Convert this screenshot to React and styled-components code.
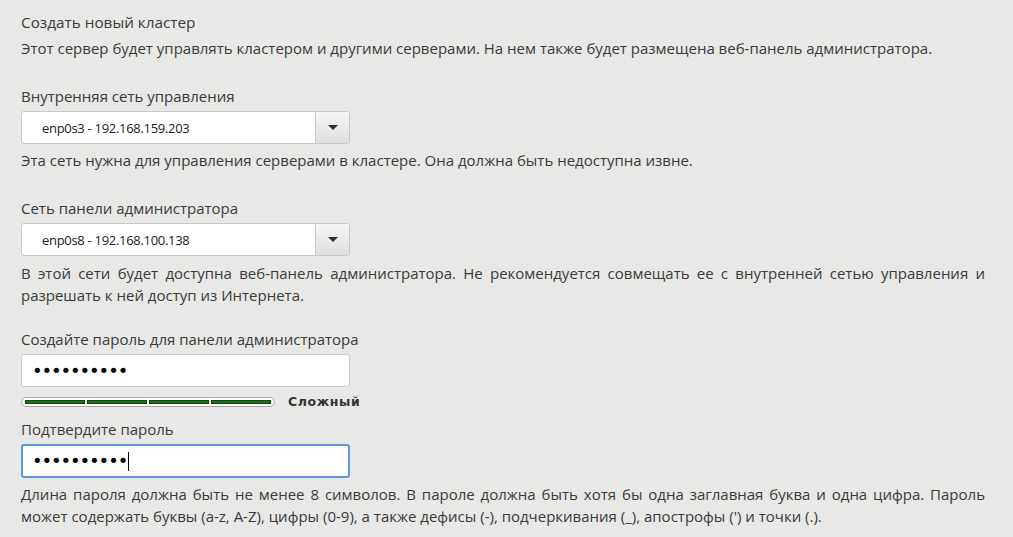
import React from "react";
import styled, { createGlobalStyle } from "styled-components";

const Global = createGlobalStyle`
  html, body {
    margin: 0;
    padding: 0;
    background: #e8e8e7;
  }
  body {
    font-family: "Open Sans", "Noto Sans", sans-serif;
    color: #3a3a3a;
  }
`;

const Page = styled.div`
  width: 964px;
  padding: 10px 0 8px 21px;
`;

const Title = styled.h1`
  margin: 0;
  font-size: 15.3px;
  font-weight: 400;
  line-height: 24px;
`;

const Text = styled.p`
  margin: ${(p) => p.$margin || "0"};
  font-size: 15px;
  line-height: 22px;
  text-align: ${(p) => (p.$justify ? "justify" : "left")};
`;

const Field = styled.div`
  margin-top: ${(p) => p.$top || 0}px;
  display: flex;
  flex-direction: column;
`;

const Label = styled.label`
  font-size: 15px;
  line-height: 22px;
  margin-bottom: 4px;
`;

const Select = styled.div`
  width: 329px;
  height: 33px;
  box-sizing: border-box;
  display: flex;
  background: #fff;
  border: 1px solid #c9c9c9;
  border-radius: 3px;
  overflow: hidden;
`;

const SelectValue = styled.div`
  flex: 1;
  display: flex;
  align-items: center;
  padding-left: 20px;
  font-size: 13px;
  letter-spacing: -0.3px;
  color: #222;
`;

const SelectButton = styled.div`
  width: 33px;
  border-left: 1px solid #c9c9c9;
  background: linear-gradient(#f6f6f6, #dedede);
  display: flex;
  align-items: center;
  justify-content: center;
  &::after {
    content: "";
    border-left: 5px solid transparent;
    border-right: 5px solid transparent;
    border-top: 5px solid #2e2e2e;
  }
`;

const PasswordBox = styled.div`
  width: 329px;
  height: ${(p) => (p.$focused ? 34 : 33)}px;
  box-sizing: border-box;
  display: flex;
  align-items: center;
  padding-left: ${(p) => (p.$focused ? 9 : 10)}px;
  background: #fff;
  border: ${(p) => (p.$focused ? "2px solid #5a9ae2" : "1px solid #c9c9c9")};
  border-radius: 3px;
`;

const Dots = styled.span`
  font-family: "DejaVu Sans", sans-serif;
  font-size: 18px;
  letter-spacing: -1.1px;
  color: #000;
  line-height: 1;
`;

const Caret = styled.span`
  width: 1px;
  height: 19px;
  margin-left: 1px;
  background: #000;
`;

const StrengthRow = styled.div`
  display: flex;
  align-items: center;
  margin-top: 7px;
`;

const Meter = styled.div`
  width: 254px;
  height: 10px;
  box-sizing: border-box;
  display: flex;
  align-items: center;
  gap: 2px;
  padding: 0 3px;
  background: #fff;
  border: 1px solid #aaa;
  border-radius: 5px;
`;

const Segment = styled.div`
  flex: 1;
  height: 4px;
  box-sizing: border-box;
  background: #1f6f1f;
  border: 1px solid #0d4a0d;
`;

const StrengthLabel = styled.span`
  margin-left: 13px;
  font-family: "DejaVu Sans", sans-serif;
  font-weight: 700;
  font-size: 12.5px;
  letter-spacing: 0.6px;
  color: #333;
`;

const NetworkSelect = ({ value }) => (
  <Select>
    <SelectValue>{value}</SelectValue>
    <SelectButton />
  </Select>
);

export default function App() {
  return (
    <>
      <Global />
      <Page>
        <Title>Создать новый кластер</Title>
        <Text $margin="3px 0 0">
          Этот сервер будет управлять кластером и другими серверами. На нем также будет размещена веб-панель администратора.
        </Text>

        <Field $top={26}>
          <Label>Внутренняя сеть управления</Label>
          <NetworkSelect value="enp0s3 - 192.168.159.203" />
          <Text $margin="5px 0 0">
            Эта сеть нужна для управления серверами в кластере. Она должна быть недоступна извне.
          </Text>
        </Field>

        <Field $top={26}>
          <Label>Сеть панели администратора</Label>
          <NetworkSelect value="enp0s8 - 192.168.100.138" />
          <Text $margin="6px 0 0" $justify>
            В этой сети будет доступна веб-панель администратора. Не рекомендуется совмещать ее с внутренней сетью управления и разрешать к ней доступ из Интернета.
          </Text>
        </Field>

        <Field $top={22}>
          <Label>Создайте пароль для панели администратора</Label>
          <PasswordBox>
            <Dots>••••••••••</Dots>
          </PasswordBox>
          <StrengthRow>
            <Meter>
              <Segment />
              <Segment />
              <Segment />
              <Segment />
            </Meter>
            <StrengthLabel>Сложный</StrengthLabel>
          </StrengthRow>
        </Field>

        <Field $top={9}>
          <Label>Подтвердите пароль</Label>
          <PasswordBox $focused>
            <Dots>••••••••••</Dots>
            <Caret />
          </PasswordBox>
          <Text $margin="5px 0 0" $justify>
            Длина пароля должна быть не менее 8 символов. В пароле должна быть хотя бы одна заглавная буква и одна цифра. Пароль может содержать буквы (a-z, A-Z), цифры (0-9), а также дефисы (-), подчеркивания (_), апострофы (') и точки (.).
          </Text>
        </Field>
      </Page>
    </>
  );
}
